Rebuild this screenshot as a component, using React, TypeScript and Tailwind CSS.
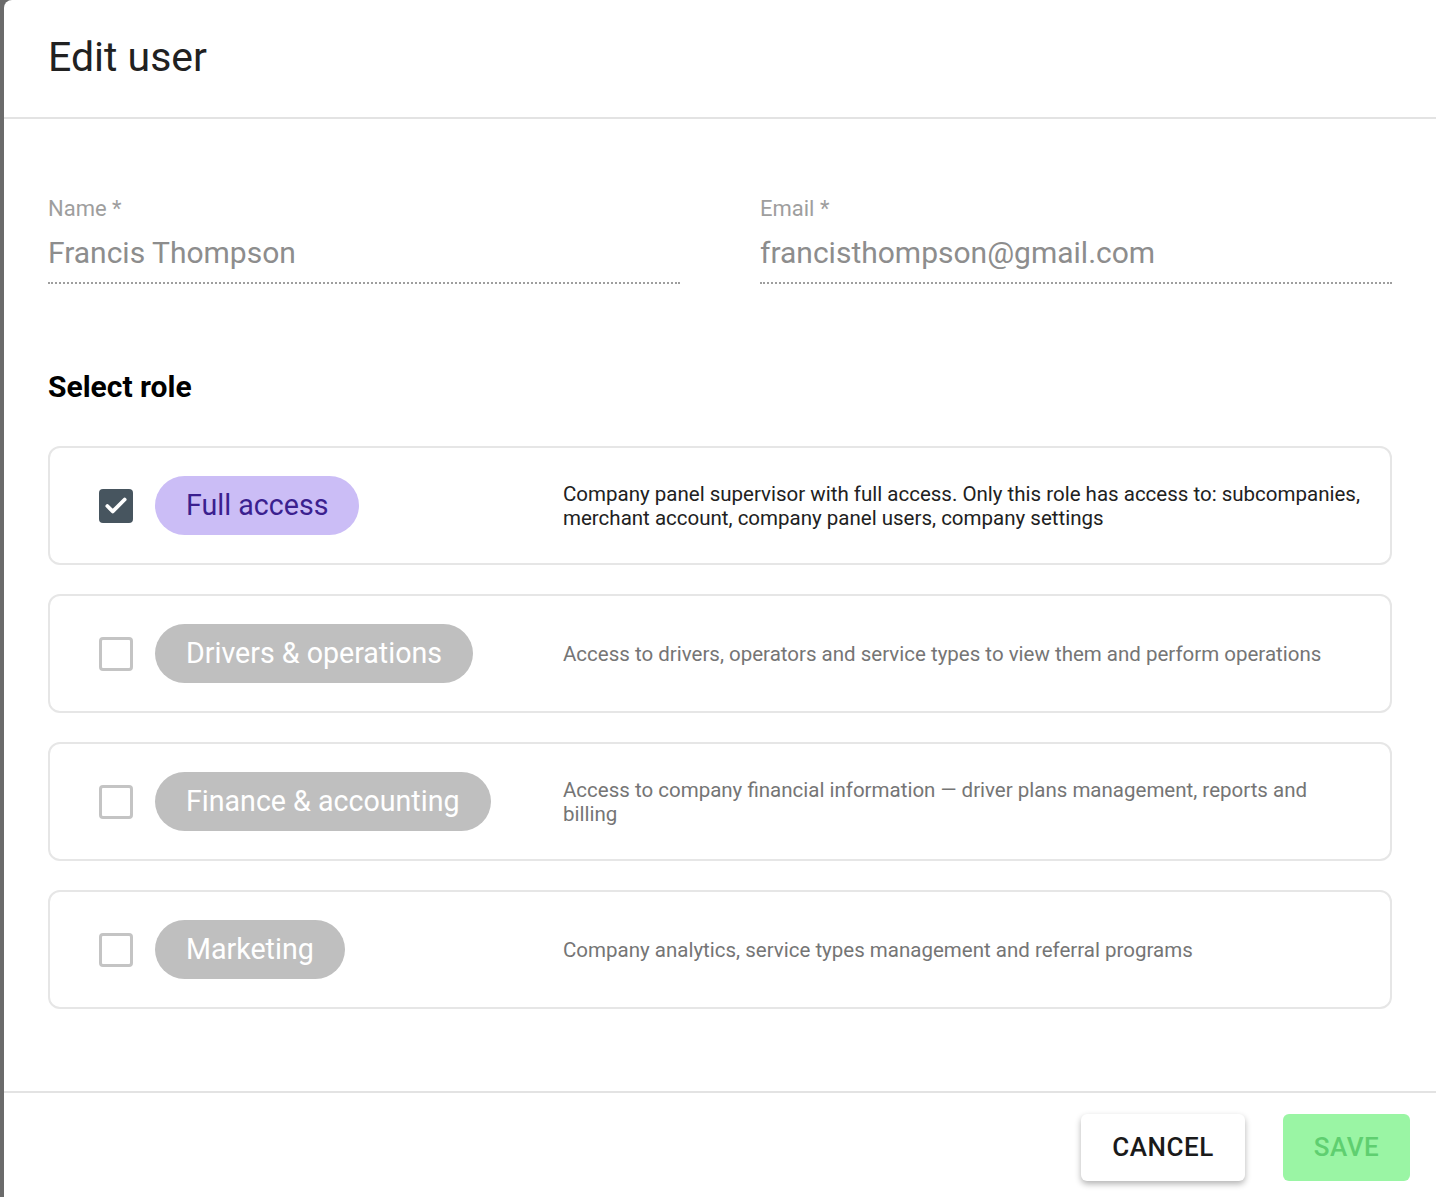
import { Check } from "lucide-react";

type Role = {
  label: string;
  description: string;
  checked: boolean;
};

const roles: Role[] = [
  {
    label: "Full access",
    description:
      "Company panel supervisor with full access. Only this role has access to: subcompanies, merchant account, company panel users, company settings",
    checked: true,
  },
  {
    label: "Drivers & operations",
    description: "Access to drivers, operators and service types to view them and perform operations",
    checked: false,
  },
  {
    label: "Finance & accounting",
    description: "Access to company financial information — driver plans management, reports and billing",
    checked: false,
  },
  {
    label: "Marketing",
    description: "Company analytics, service types management and referral programs",
    checked: false,
  },
];

function Field({ label, value }: { label: string; value: string }) {
  return (
    <div className="flex flex-col">
      <span className="text-[22px] leading-[26px] text-[#9e9e9e]">{label}</span>
      <span className="mt-[14px] border-b-2 border-dotted border-[#9e9e9e] pb-[12px] text-[30px] leading-[34px] text-[#8d8d8d]">
        {value}
      </span>
    </div>
  );
}

function RoleCard({ role }: { role: Role }) {
  return (
    <div className="flex h-[119px] items-center rounded-[12px] border-2 border-[#e6e6e6] pl-[49px] pr-[28px]">
      <div className="flex w-[464px] shrink-0 items-center gap-[22px]">
        {role.checked ? (
          <span className="flex h-[34px] w-[34px] items-center justify-center rounded-[4px] bg-[#47555f]">
            <Check className="h-[26px] w-[26px] text-white" strokeWidth={3.5} />
          </span>
        ) : (
          <span className="h-[34px] w-[34px] rounded-[4px] border-[3px] border-[#c4c4c4] bg-white" />
        )}
        <span
          className={
            role.checked
              ? "flex h-[59px] items-center rounded-full bg-[#cbbdf6] px-[31px] text-[28.6px] text-[#3b1f8f]"
              : "flex h-[59px] items-center rounded-full bg-[#bfbfbf] px-[31px] text-[28.6px] text-white"
          }
        >
          {role.label}
        </span>
      </div>
      <p
        className={
          role.checked
            ? "text-[20.5px] leading-[24px] text-[#212121]"
            : "text-[20.5px] leading-[24px] text-[#757575]"
        }
      >
        {role.description}
      </p>
    </div>
  );
}

export default function App() {
  return (
    <div className="flex h-[1197px] w-full bg-[#6b6b6b] font-['Roboto',sans-serif]">
      <div className="w-[4px] shrink-0" />
      <div className="flex flex-1 flex-col rounded-tl-[8px] bg-white">
        {/* Header */}
        <div className="flex h-[119px] items-center border-b-2 border-[#e3e3e3] pl-[44px] pb-[2px]">
          <h1 className="text-[41px] leading-none text-[#212121]">Edit user</h1>
        </div>

        {/* Body */}
        <div className="flex-1 px-[44px] pt-[77px]">
          <div className="grid grid-cols-2 gap-x-[80px]">
            <Field label="Name *" value="Francis Thompson" />
            <Field label="Email *" value="francisthompson@gmail.com" />
          </div>

          <h2 className="mt-[86px] text-[30px] font-bold leading-[34px] text-black">Select role</h2>

          <div className="mt-[42px] flex flex-col gap-[29px]">
            {roles.map((r) => (
              <RoleCard key={r.label} role={r} />
            ))}
          </div>
        </div>

        {/* Footer */}
        <div className="flex h-[106px] items-start justify-end gap-[38px] border-t-2 border-[#e3e3e3] pr-[26px] pt-[21px]">
          <button className="flex h-[67px] w-[164px] items-center justify-center rounded-[6px] bg-white text-[26px] font-medium tracking-[0.5px] text-[#1a1a1a] shadow-[0_3px_6px_rgba(0,0,0,0.3)]">
            CANCEL
          </button>
          <button className="flex h-[67px] w-[127px] items-center justify-center rounded-[6px] bg-[#9af5a4] text-[26px] font-medium tracking-[0.5px] text-[#5fcf70]">
            SAVE
          </button>
        </div>
      </div>
    </div>
  );
}
